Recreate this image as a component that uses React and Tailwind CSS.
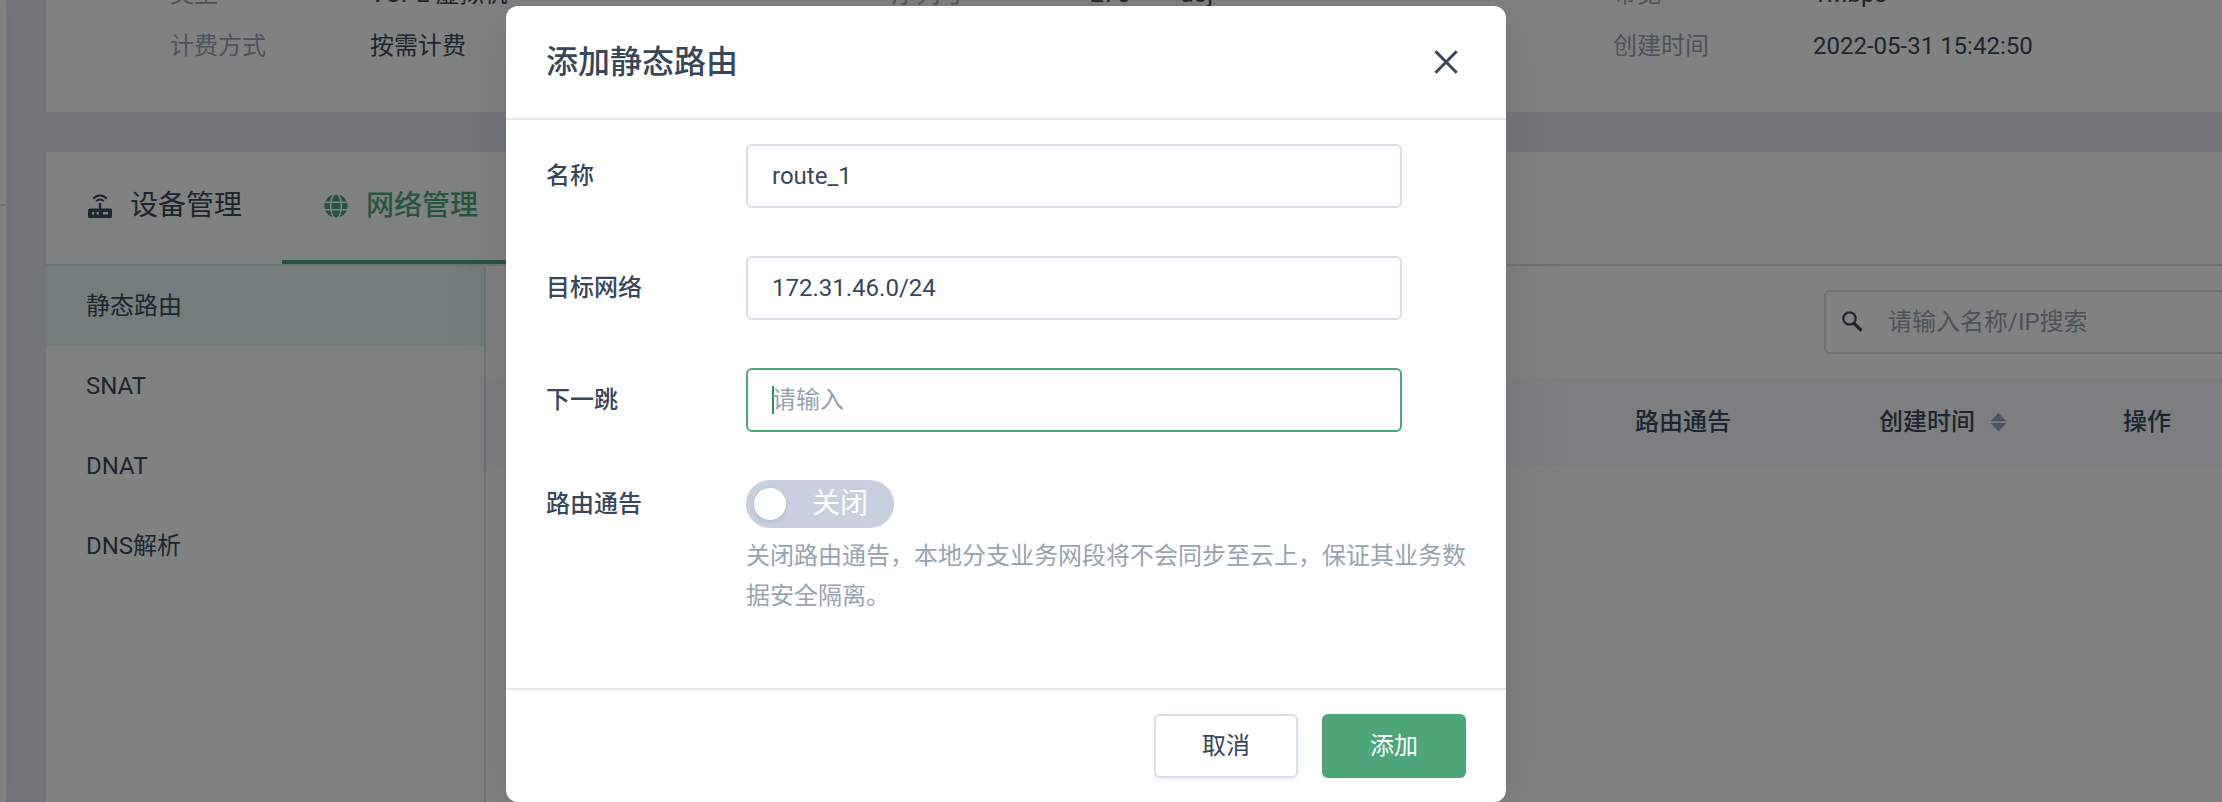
import React from "react";

const NAV = ["静态路由", "SNAT", "DNAT", "DNS解析"];

function RouterIcon() {
  return (
    <svg width="24" height="24" viewBox="0 0 24 24" fill="none" className="shrink-0">
      <path
        fillRule="evenodd"
        fill="#38475a"
        d="M1.500 14.500H10.900V9h2.200v5.500H22.500A1.500 1.500 0 0 1 24 16v6.500a1.500 1.500 0 0 1-1.500 1.500h-21A1.500 1.500 0 0 1 0 22.500V16a1.500 1.500 0 0 1 1.500-1.500ZM4 18v2.400h2.200v-2.400ZM8.600 18v2.400h2.200v-2.400ZM15 18v2.400h5v-2.400Z"
      />
      <path d="M5.300 4.500C8.800 .4 15.200 .4 18.700 4.500M8.200 7.200c2-2.300 5.600-2.300 7.600 0" stroke="#38475a" strokeWidth="2" />
    </svg>
  );
}

function GlobeIcon() {
  return (
    <svg width="24" height="24" viewBox="0 0 496 512" fill="#4ca67a" className="shrink-0">
      <path d="M336.500 160C322 70.700 287.800 8 248 8s-74 62.700-88.500 152h177zM152 256c0 22.200 1.200 43.500 3.300 64h185.300c2.100-20.500 3.300-41.800 3.300-64s-1.200-43.500-3.300-64H155.300c-2.100 20.500-3.300 41.800-3.300 64zm324.700-96c-28.600-67.900-86.500-120.400-158-141.600 24.400 33.800 41.200 84.700 50 141.600h108zM177.200 18.400C105.800 39.600 47.800 92.100 19.300 160h108c8.700-56.900 25.500-107.800 49.900-141.600zM487.400 192H372.700c2.100 21 3.300 42.500 3.300 64s-1.200 43-3.300 64h114.600c5.500-20.500 8.600-41.800 8.600-64s-3.100-43.500-8.500-64zM120 256c0-21.500 1.200-43 3.300-64H8.600C3.200 212.500 0 233.800 0 256s3.200 43.500 8.600 64h114.600c-2-21-3.200-42.500-3.200-64zm39.500 96c14.500 89.300 48.700 152 88.500 152s74-62.700 88.500-152h-177zm159.300 141.600c71.400-21.200 129.400-73.700 158-141.600h-108c-8.800 56.900-25.600 107.800-50 141.600zM19.300 352c28.600 67.900 86.500 120.400 158 141.600-24.400-33.800-41.200-84.700-50-141.600h-108z" />
    </svg>
  );
}

function Detail({ label, value, className }) {
  return (
    <div className={className}>
      <dt className="w-[200px] shrink-0 text-[#98a3b0]">{label}</dt>
      <dd>{value}</dd>
    </div>
  );
}

const SERIAL = (
  <span className="-ml-[2px] flex gap-[50px]">
    <span>270</span>
    <span>aoj</span>
  </span>
);

const DETAILS = [
  ["类型", "VCPE 虚拟机", "序列号", SERIAL, "带宽", "1Mbps"],
  ["计费方式", "按需计费", "", "", "创建时间", "2022-05-31 15:42:50"],
];

function Page() {
  return (
    <div className="flex h-full w-full bg-[#e5ebf3]">
      <aside className="flex w-[6px] shrink-0 flex-col bg-white shadow-[0_0_16px_rgba(30,60,80,0.12)]">
        <div className="h-[206px] border-b-2 border-[#d8dee8]" />
      </aside>
      <main className="ml-10 flex w-[2176px] shrink-0 flex-col gap-10">
        <section className="flex h-[112px] shrink-0 flex-col justify-end overflow-hidden bg-white pb-10">
          <dl className="flex shrink-0 flex-col">
            {DETAILS.map((r) => (
              <div key={r[0]} className="flex h-[52px] items-center whitespace-nowrap">
                <Detail label={r[0]} value={r[1]} className="ml-[124px] flex w-[722px]" />
                <Detail label={r[2]} value={r[3]} className="flex w-[721px]" />
                <Detail label={r[4]} value={r[5]} className="flex" />
              </div>
            ))}
          </dl>
        </section>
        <section className="flex flex-1 flex-col bg-white">
          <nav className="flex h-[114px] shrink-0 border-b-2 border-[#dde2ee] text-[28px]">
            <div className="flex w-[236px] items-center gap-[18px] pb-1 pl-[42px]">
              <RouterIcon />
              <span>设备管理</span>
            </div>
            <div className="flex w-[236px] items-center gap-[18px] border-b-4 border-[#4ca67a] pl-[42px] font-medium text-[#4ca67a]">
              <GlobeIcon />
              <span>网络管理</span>
            </div>
          </nav>
          <div className="flex flex-1">
            <ul className="w-[440px] shrink-0 border-r-2 border-[#dde2ee]">
              {NAV.map((n, i) => (
                <li key={n} className={i === 0 ? "flex h-20 items-center bg-[#e5f6f2] pl-10" : "flex h-20 items-center pl-10"}>
                  {n}
                </li>
              ))}
            </ul>
            <div className="flex flex-1 flex-col overflow-hidden">
              <div className="flex h-[112px] items-center justify-end">
                <div className="-mr-10 flex h-16 w-[438px] shrink-0 items-center rounded-md border-2 border-[#d6dee8] pl-4 text-[#98a3b0]">
                  <svg width="22" height="22" viewBox="0 0 22 22" fill="none" stroke="#38475a">
                    <circle cx="7.500" cy="7.500" r="6.200" strokeWidth="2.200" />
                    <path d="M12.600 12.900l5.900 5.700" strokeWidth="3.400" strokeLinecap="round" />
                  </svg>
                  <span className="ml-6">请输入名称/IP搜索</span>
                </div>
              </div>
              <div className="flex h-[88px] items-center bg-[#f7f9fc] pl-[1149px] font-medium">
                <span className="w-[244px] shrink-0">路由通告</span>
                <span className="flex w-[244px] shrink-0 items-center gap-[15px]">
                  创建时间
                  <svg width="17" height="20" viewBox="0 0 17 20" fill="#98a3b0">
                    <path d="M8.500 1L16.500 9.200H.5zM8.500 19.200L.5 11H16.500z" />
                  </svg>
                </span>
                <span>操作</span>
              </div>
            </div>
          </div>
        </section>
      </main>
    </div>
  );
}

function Field({ label, value, placeholder }) {
  return (
    <div className="flex h-16 items-center">
      <span className="w-[200px] font-medium">{label}</span>
      <div className={placeholder ? "flex h-16 w-[656px] items-center rounded-md border-2 border-[#4ca67a] pl-6" : "flex h-16 w-[656px] items-center rounded-md border-2 border-[#d8dee8] pl-6"}>
        {placeholder ? (
          <>
            <span className="h-7 w-[2px] bg-[#2f8f62]" />
            <span className="-ml-[2px] text-[#98a3b0]">{placeholder}</span>
          </>
        ) : (
          value
        )}
      </div>
    </div>
  );
}

function Dialog() {
  return (
    <div className="ml-[506px] mt-[6px] flex h-[796px] w-[1000px] flex-col rounded-xl bg-white shadow-[0_8px_64px_rgba(0,0,0,0.1)]">
      <header className="flex h-[114px] shrink-0 items-center justify-between border-b-2 border-[#e6ebf0] px-10">
        <h2 className="text-[32px] font-medium">添加静态路由</h2>
        <svg width="40" height="40" viewBox="0 0 40 40" stroke="#38475a" strokeWidth="3">
          <path d="M9.500 9.200l21.200 21.600M30.700 9.200l-21.200 21.600" />
        </svg>
      </header>
      <div className="flex flex-1 flex-col gap-12 px-10 pt-6">
        <Field label="名称" value="route_1" />
        <Field label="目标网络" value="172.31.46.0/24" />
        <Field label="下一跳" placeholder="请输入" />
        <div className="flex">
          <span className="w-[200px] shrink-0 font-medium leading-[48px]">路由通告</span>
          <div className="w-[724px]">
            <div className="flex h-12 w-[148px] items-center rounded-full bg-[#c8d0dd] pl-2 text-[28px] text-white">
              <span className="size-8 rounded-full bg-white shadow-[0_2px_4px_rgba(50,80,110,0.15)]" />
              <span className="ml-[26px]">关闭</span>
            </div>
            <p className="mt-2 whitespace-nowrap leading-10 text-[#98a3b0]">
              关闭路由通告，本地分支业务网段将不会同步至云上，保证其业务数
              <br />
              据安全隔离。
            </p>
          </div>
        </div>
      </div>
      <footer className="flex h-[114px] shrink-0 justify-end gap-6 border-t-2 border-[#e6ebf0] px-10 pt-6">
        <button className="h-16 w-36 rounded-md border-2 border-[#d8dfe8] bg-white shadow-[0_2px_4px_rgba(50,100,110,0.08)]">取消</button>
        <button className="h-16 w-36 rounded-md bg-[#4ca67a] text-white">添加</button>
      </footer>
    </div>
  );
}

export default function App() {
  return (
    <div className="relative h-[802px] w-[2222px] overflow-hidden font-[Roboto,'Noto_Sans_CJK_SC',sans-serif] text-2xl text-[#38475a]">
      <Page />
      <div className="absolute inset-0 bg-[#020304]/50">
        <Dialog />
      </div>
    </div>
  );
}
